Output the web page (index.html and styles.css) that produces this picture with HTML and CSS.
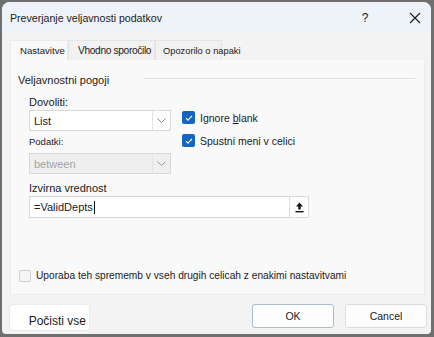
FILE: index.html
```html
<!DOCTYPE html>
<html>
<head>
<meta charset="utf-8">
<link rel="stylesheet" href="styles.css">
</head>
<body>
<div class="window">
  <div class="titlebar">
    <span class="title">Preverjanje veljavnosti podatkov</span>
    <span class="help">?</span>
    <span class="close"><svg width="12" height="12" viewBox="0 0 12 12"><path d="M1 1L11 11M11 1L1 11" stroke="#1a1a1a" stroke-width="1.1" fill="none"/></svg></span>
  </div>
  <div class="body">
    <div class="tabs">
      <div class="tab active">Nastavitve</div>
      <div class="tab t2">Vhodno sporočilo</div>
      <div class="tab t3">Opozorilo o napaki</div>
    </div>
    <div class="panel">
      <div class="group-head"><span>Veljavnostni pogoji</span><span class="rule"></span></div>
      <div class="criteria">
        <div class="left">
          <div class="label">Dovoliti:</div>
          <div class="select"><span class="val">List</span><span class="arrow"><svg width="9" height="5" viewBox="0 0 9 5"><path d="M0.5 0.5L4.5 4.5L8.5 0.5" stroke="#888" fill="none"/></svg></span></div>
          <div class="label small">Podatki:</div>
          <div class="select disabled"><span class="val">between</span><span class="arrow"><svg width="9" height="5" viewBox="0 0 9 5"><path d="M0.5 0.5L4.5 4.5L8.5 0.5" stroke="#999" fill="none"/></svg></span></div>
        </div>
        <div class="checks">
          <div class="check"><span class="box on"><svg width="10" height="10" viewBox="0 0 10 10"><path d="M2 5.2L4 7.2L8 2.8" stroke="#fff" stroke-width="1.2" fill="none"/></svg></span><span>Ignore <u>b</u>lank</span></div>
          <div class="check"><span class="box on"><svg width="10" height="10" viewBox="0 0 10 10"><path d="M2 5.2L4 7.2L8 2.8" stroke="#fff" stroke-width="1.2" fill="none"/></svg></span><span>Spustni meni v celici</span></div>
        </div>
      </div>
      <div class="label src">Izvirna vrednost</div>
      <div class="input"><span class="val">=ValidDepts</span><span class="caret"></span><span class="pick"><svg width="9" height="11" viewBox="0 0 9 11"><path d="M4.5 0.5L1 4.5H3.3V7.5H5.7V4.5H8Z" fill="#111"/><rect x="0.5" y="9" width="8" height="1.4" fill="#111"/></svg></span></div>
      <div class="spacer"></div>
      <div class="check apply"><span class="box off"></span><span>Uporaba teh sprememb v vseh drugih celicah z enakimi nastavitvami</span></div>
    </div>
    <div class="buttons">
      <div class="btn clear">Počisti vse</div>
      <div class="right">
        <div class="btn ok">OK</div>
        <div class="btn">Cancel</div>
      </div>
    </div>
  </div>
</div>
</body>
</html>
```

FILE: styles.css
```css
* { box-sizing: border-box; }
html, body { margin: 0; padding: 0; }
body {
  width: 434px;
  height: 337px;
  background: #6f6f6f;
  font-family: "Liberation Sans", Arial, sans-serif;
  color: #1b1b1b;
  overflow: hidden;
}
.window {
  margin: 2px 3px 0 2px;
  height: 332px;
  background: #f3f3f3;
  border-radius: 8px 8px 4px 4px;
  overflow: hidden;
  display: flex;
  flex-direction: column;
}
.titlebar {
  height: 31px;
  background: #eef3f9;
  display: flex;
  align-items: center;
  padding-left: 8px;
  font-size: 10.6px;
}
.title { flex: 1; }
.help { width: 20px; font-size: 12px; margin-right: 34px; text-align: center; }
.close { width: 12px; height: 12px; margin-right: 10px; display: flex; }
.body {
  flex: 1;
  display: flex;
  flex-direction: column;
  padding: 7px 4px 0 8px;
}
.tabs { display: flex; height: 20px; }
.tab {
  font-size: 10.2px;
  display: flex;
  align-items: center;
  padding: 0 0 0 8px;
  border: 1px solid #e4e4e4;
  border-bottom: none;
  background: #f1f1f1;
  white-space: nowrap;
}
.tab.active { background: #f9f9f9; width: 58px; border-color: #ececec; padding-left: 9px; font-size: 9.6px; }
.tab.t2 { width: 87px; padding-left: 9px; letter-spacing: -0.35px; overflow: hidden; }
.tab.t3 { width: 67px; font-size: 9.3px; padding-left: 7px; }
.panel {
  background: #f9f9f9;
  height: 235px;
  border: 1px solid #ececec;
  border-top: none;
  margin-right: 2px;
  padding: 13px 9px 0 7px;
  display: flex;
  flex-direction: column;
}
.group-head { display: flex; align-items: center; font-size: 11px; height: 14px; }
.group-head .rule { flex: 1; height: 1px; background: #e1e1e1; margin: 0 0 0 34px; position: relative; top: -2px; }
.criteria { display: flex; padding-left: 11px; margin-top: 7px; }
.left { width: 142px; display: flex; flex-direction: column; }
.label { font-size: 11px; height: 16px; line-height: 16px; }
.label.small { font-size: 9.5px; height: 22px; line-height: 22px; margin-top: 0; }
.select {
  height: 21px;
  background: #fff;
  border: 1px solid #d9d9d9;
  display: flex;
  align-items: center;
  font-size: 11px;
}
.select .val { flex: 1; padding-left: 4px; }
.select .arrow {
  width: 18px; height: 100%;
  border-left: 1px solid #e3e3e3;
  display: flex; align-items: center; justify-content: center;
}
.select.disabled { background: #efefef; color: #a3a3a3; }
.checks { margin-left: 11px; display: flex; flex-direction: column; gap: 10px; padding-top: 17px; }
.check { display: flex; align-items: center; font-size: 10.5px; height: 13px; white-space: nowrap; }
.box {
  width: 13px; height: 13px; border-radius: 2px; margin-right: 5px; flex: none;
  display: flex; align-items: center; justify-content: center;
}
.box.on { background: #1565c0; }
.box.off { border: 1px solid #cfcfcf; background: #f5f5f5; width: 12px; height: 12px; }
.label.src { margin-left: 11px; margin-top: 6px; }
.input {
  margin-left: 11px;
  width: 280px;
  height: 22px;
  background: #fff;
  border: 1px solid #d9d9d9;
  display: flex;
  align-items: center;
  font-size: 11px;
}
.input .val { padding-left: 4px; color: #222; }
.caret { width: 1px; height: 13px; background: #111; margin-left: 1px; }
.input .pick {
  margin-left: auto;
  width: 19px; height: 20px;
  border-left: 1px solid #e0e0e0;
  display: flex; align-items: center; justify-content: center;
}
.spacer { flex: 1; }
.check.apply { font-size: 10.2px; margin-bottom: 12px; margin-left: 1px; }
.buttons {
  display: flex;
  justify-content: space-between;
  align-items: flex-start;
  padding-top: 9px;
}
.btn {
  width: 82px; height: 24px;
  background: #fdfdfd;
  border: 1px solid #dcdcdc;
  border-radius: 3px;
  display: flex; align-items: center; justify-content: center;
  font-size: 10.5px;
}
.btn.clear { width: 81px; height: 27px; font-size: 12px; border-color: #eaeaea; margin-left: -1px; padding-top: 6px; justify-content: flex-end; padding-right: 3px; background: #fff; }
.right { display: flex; gap: 11px; }
.btn.ok { border-color: #a9bdd1; }
```
